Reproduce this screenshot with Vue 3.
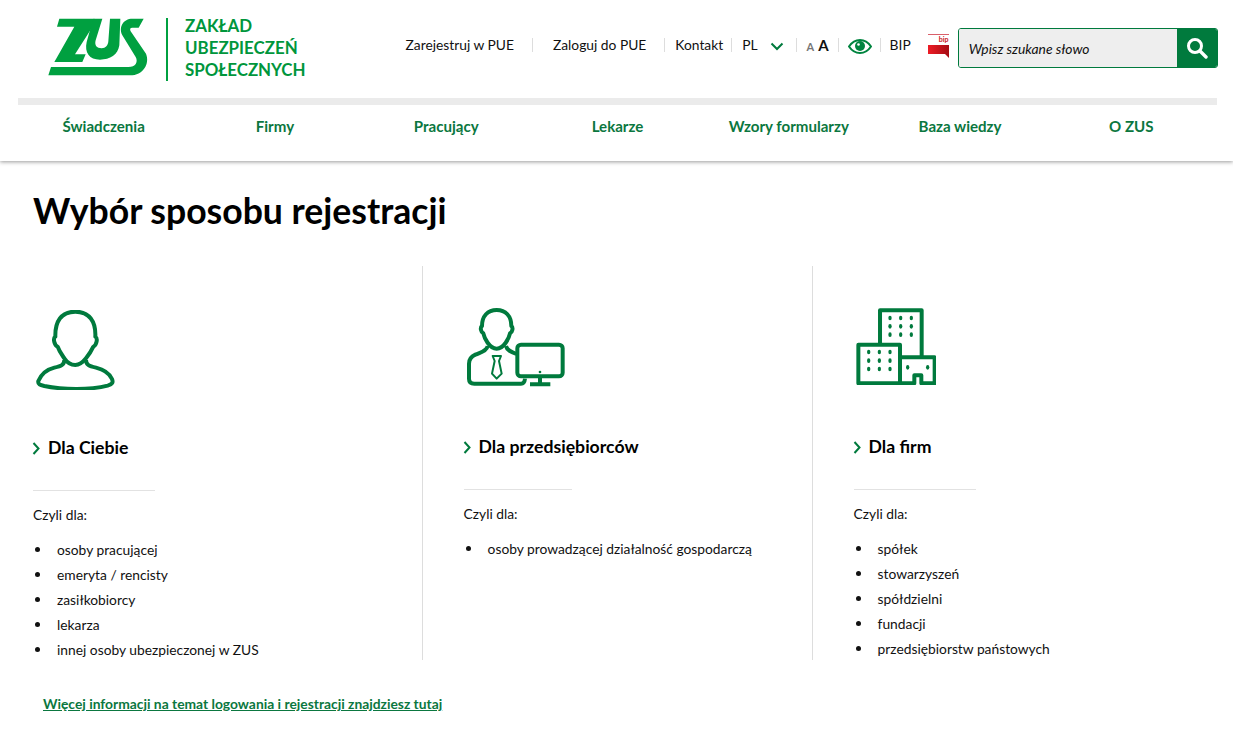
<template>
  <div class="page">
    <header class="header">
      <div class="top">
        <a class="logo" href="#">
          <svg class="logo-mark" viewBox="0 0 330 210" width="110" height="70">
            <path d="M43 20H148V36L90 127H122L112 150H28L88 44H36Z" />
            <path d="M140 36L146 20H172L152 85C148 100 155 109 170 109C182 109 189 100 190 88L195 20H226L223 100C219 128 195 143 165 143C133 143 118 122 125 90Z" />
            <path d="M296 20L281 47H262C255 47 254 52 257 58L303 125C315 155 295 190 255 190H10L18 165H250C272 165 280 150 272 135L232 70C220 45 235 20 262 20Z" />
          </svg>
          <span class="logo-line"></span>
          <span class="logo-text">ZAKŁAD<br />UBEZPIECZEŃ<br />SPOŁECZNYCH</span>
        </a>
        <nav class="util">
          <a class="util-item first" href="#">Zarejestruj w PUE</a>
          <a class="util-item wide" href="#">Zaloguj do PUE</a>
          <a class="util-item kontakt" href="#">Kontakt</a>
          <div class="util-item lang">
            PL
            <svg viewBox="0 0 14 9" width="14" height="9" class="chev">
              <path d="M1.5 1.5L7 7L12.5 1.5" fill="none" stroke="#007a3d" stroke-width="2" />
            </svg>
          </div>
          <div class="util-item sizes"><span class="a-small">A</span><span class="a-big">A</span></div>
          <div class="util-item eye">
            <svg viewBox="0 0 24 15" width="24" height="15">
              <path d="M1 7.5C4 3 8 1 12 1C16 1 20 3 23 7.5C20 12 16 14 12 14C8 14 4 12 1 7.5Z" fill="none" stroke="#00843f" stroke-width="2" />
              <circle cx="12" cy="7" r="5" fill="#00843f" />
              <circle cx="10.5" cy="5.5" r="1.3" fill="#fff" />
            </svg>
          </div>
          <a class="util-item bip-link" href="#">BIP</a>
          <svg class="bip" viewBox="0 0 21 24" width="21" height="24">
            <defs>
              <linearGradient id="bipGrad" x1="0" x2="1" y1="0" y2="0">
                <stop offset="0" stop-color="#ee1c25" />
                <stop offset="1" stop-color="#a50d14" />
              </linearGradient>
            </defs>
            <rect x="0" y="0" width="21" height="1" fill="#d9606a" />
            <text x="20.5" y="8" text-anchor="end" class="bip-text">bip</text>
            <path d="M0 11H21V24L17 20H0Z" fill="url(#bipGrad)" />
          </svg>
        </nav>
        <form class="search" @submit.prevent>
          <input class="search-input" type="text" placeholder="Wpisz szukane słowo" v-model="keyword" />
          <button class="search-btn" type="submit" aria-label="Szukaj">
            <svg viewBox="0 0 22 22" width="22" height="22">
              <circle cx="9" cy="9" r="6.5" fill="none" stroke="#fff" stroke-width="3" />
              <path d="M14 14L20 20" stroke="#fff" stroke-width="3.4" stroke-linecap="round" />
            </svg>
          </button>
        </form>
      </div>
      <div class="grey-bar"></div>
      <nav class="menu">
        <a v-for="item in menu" :key="item" href="#">{{ item }}</a>
      </nav>
    </header>

    <main class="content">
      <h1>Wybór sposobu rejestracji</h1>
      <div class="cols">
        <section class="col" v-for="col in cols" :key="col.title" :class="col.cls">
          <div class="icon">
            <svg v-if="col.cls === 'you'" viewBox="50 45 240 240" width="80" height="80" class="ico">
              <path d="M168 50C125 50 107 80 108 125C100 130 105 150 115 155C120 170 128 180 135 190C145 205 160 210 168 210C180 210 192 200 200 190C208 180 215 170 222 155C232 150 236 130 228 125C230 80 210 50 168 50Z" />
              <path d="M135 195C135 210 125 213 105 218C80 224 65 240 57 258C55 268 62 270 75 273C135 285 210 285 265 272C280 268 282 262 278 252C270 235 255 224 230 218C210 213 200 210 200 195" />
            </svg>
            <svg v-else-if="col.cls === 'biz'" viewBox="30 38 297 237" width="99" height="79" class="ico">
              <path d="M122 44C95 44 78 62 78 92C72 96 74 110 82 114C85 128 100 160 122 160C144 160 159 128 162 114C170 110 172 96 166 92C166 62 149 44 122 44Z" />
              <path d="M95 152C92 168 75 170 58 178C45 184 39 192 39 205V250C39 260 45 265 55 265H195C202 265 206 260 207 250" />
              <path d="M150 152C153 165 165 170 181 176" />
              <rect x="184" y="148" width="136" height="95" rx="11" />
              <path d="M252 243V267M222 267H283" />
              <circle cx="252" cy="230" r="4" class="fill" />
              <path d="M110 182H135L129 197L137 235L122 250L108 235L116 197Z" class="thin" />
            </svg>
            <svg v-else viewBox="33 40 242 232" width="80.7" height="77.3" class="ico">
              <path d="M105 150V47H230V187" />
              <rect x="40" y="150" width="125" height="116" />
              <path d="M165 188H269V266H229V242H208V266H165" />
              <g class="dots">
                <ellipse v-for="d in dots" :key="d[0] + '-' + d[1]" :cx="d[0]" :cy="d[1]" rx="5" ry="7" />
              </g>
            </svg>
          </div>
          <h2><svg viewBox="0 0 8 13" width="8" height="13" class="arrow"><path d="M1.5 1L6.5 6.5L1.5 12" fill="none" stroke="#007a3d" stroke-width="2" /></svg>{{ col.title }}</h2>
          <hr />
          <p>Czyli dla:</p>
          <ul>
            <li v-for="row in col.rows" :key="row">{{ row }}</li>
          </ul>
        </section>
      </div>
      <a class="more" href="#">Więcej informacji na temat logowania i rejestracji znajdziesz tutaj</a>
    </main>
  </div>
</template>

<script setup>
import { ref } from 'vue';

const keyword = ref('');

const menu = ['Świadczenia', 'Firmy', 'Pracujący', 'Lekarze', 'Wzory formularzy', 'Baza wiedzy', 'O ZUS'];

const cols = [
  { cls: 'you', title: 'Dla Ciebie', rows: ['osoby pracującej', 'emeryta / rencisty', 'zasiłkobiorcy', 'lekarza', 'innej osoby ubezpieczonej w ZUS'] },
  { cls: 'biz', title: 'Dla przedsiębiorców', rows: ['osoby prowadzącej działalność gospodarczą'] },
  { cls: 'org', title: 'Dla firm', rows: ['spółek', 'stowarzyszeń', 'spółdzielni', 'fundacji', 'przedsiębiorstw państowych'] },
];

// kropki-okna na budynkach
const dots = [
  [135, 70], [167, 70], [199, 70], [135, 95], [167, 95], [199, 95], [135, 120], [167, 120], [199, 120],
  [71, 172], [103, 172], [135, 172], [71, 198], [103, 198], [135, 198], [71, 223], [103, 223], [135, 223],
  [188, 218], [248, 218],
];
</script>

<style>
body {
  background: #fff;
}
</style>

<style scoped>
.page {
  font-family: Lato, "Liberation Sans", sans-serif;
  color: #111;
  font-size: 13.8px;
}
a {
  color: inherit;
  text-decoration: none;
}
.header {
  height: 161px;
  box-shadow: 0 1px 4px rgba(0, 0, 0, 0.4);
}
.top {
  height: 98px;
  display: flex;
  align-items: flex-start;
}
.logo {
  display: flex;
  align-items: flex-start;
  margin: 12px 0 0 45px;
}
.logo-mark path {
  fill: #00a040;
}
.logo-line {
  width: 2px;
  height: 63px;
  margin: 6px 0 0 11px;
  background: #00a040;
}
.logo-text {
  margin: 3px 0 0 17px;
  font-weight: 700;
  font-size: 16.9px;
  line-height: 22px;
  color: #00963c;
}
.util {
  display: flex;
  align-items: center;
  height: 20px;
  margin: 35px 0 0 100px;
}
.util-item {
  display: flex;
  align-items: center;
  height: 14px;
  padding: 0 9px 0 10px;
  border-right: 1px solid #ddd;
  line-height: 14px;
  white-space: nowrap;
}
.util-item.first {
  padding: 0 18px 0 0;
}
.util-item.wide {
  padding: 0 18px 0 20px;
}
.util-item.kontakt {
  padding-right: 8px;
}
.lang {
  gap: 12px;
  padding-right: 12px;
}
.chev {
  margin-top: 2px;
}
.sizes {
  align-items: baseline;
  gap: 4px;
}
.a-small {
  font-size: 11px;
  font-weight: 700;
  color: #777;
}
.a-big {
  font-size: 15px;
  font-weight: 700;
}
.eye {
  padding: 0 8px 0 9px;
}
.eye svg {
  margin-top: 3px;
}
.bip-link {
  border-right: 0;
  padding-left: 9px;
}
.bip {
  margin: -1px 0 0 8px;
  align-self: flex-start;
}
.bip-text {
  font-size: 7px;
  font-weight: 700;
  fill: #c8141c;
}
.search {
  display: flex;
  width: 260px;
  height: 40px;
  margin: 28px 0 0 9px;
  border: 1px solid #007a3d;
  border-radius: 3px;
  box-sizing: border-box;
  overflow: hidden;
}
.search-input {
  flex: 1;
  min-width: 0;
  border: 0;
  outline: 0;
  padding: 0 10px;
  background: #eee;
  font: italic 13.85px Lato, sans-serif;
  color: #111;
}
.search-input::placeholder {
  color: #111;
  opacity: 1;
}
.search-btn {
  width: 40px;
  border: 0;
  padding: 0;
  background: #007a3d;
  display: flex;
  align-items: center;
  justify-content: center;
}
.grey-bar {
  height: 7px;
  margin: 0 16px 0 18px;
  background: #ebebeb;
}
.menu {
  display: grid;
  grid-template-columns: repeat(7, 1fr);
  margin: 0 16px 0 18px;
  padding-top: 12px;
}
.menu a {
  text-align: center;
  font-weight: 700;
  font-size: 15.1px;
  line-height: 18px;
  color: #0b7740;
}
.content {
  padding: 0 0 0 33px;
}
h1 {
  margin: 0;
  padding-top: 27px;
  font-size: 35.6px;
  line-height: 46px;
  font-weight: 700;
  color: #000;
}
.cols {
  display: flex;
  margin-top: 32px;
  height: 394px;
}
.col {
  width: 390px;
  box-sizing: border-box;
  padding-left: 40.6px;
  padding-top: 42px;
  border-right: 1px solid #ddd;
}
.col.you {
  padding-left: 0;
}
.col.org {
  border-right: 0;
}
.icon {
  height: 84px;
  margin-left: 2px;
}
.col.you .icon {
  height: 83px;
  padding-top: 2px;
  margin-left: 3px;
}
.ico {
  fill: none;
  stroke: #007a3d;
  stroke-width: 12;
  stroke-linejoin: round;
}
.ico .fill,
.ico .dots {
  fill: #007a3d;
  stroke: none;
}
.ico .thin {
  stroke-width: 6;
}
h2 {
  display: flex;
  align-items: center;
  margin: 44px 0 0;
  font-size: 17.65px;
  line-height: 22px;
  font-weight: 700;
  color: #000;
}
.arrow {
  margin: 0 8px 0 -1px;
}
hr {
  width: 122px;
  height: 1px;
  margin: 31px 0 0;
  border: 0;
  background: #e2e2e2;
}
.col.biz hr {
  width: 108px;
}
p {
  margin: 15px 0 0;
  line-height: 18px;
}
ul {
  list-style: none;
  margin: 13px 0 0;
  padding: 0;
}
li {
  display: flex;
  align-items: center;
  height: 25px;
}
li::before {
  content: "";
  width: 5px;
  height: 5px;
  margin: 0 17px 0 2px;
  border-radius: 50%;
  background: #111;
}
.more {
  display: inline-block;
  margin: 35px 0 0 10px;
  font-weight: 700;
  font-size: 13.83px;
  color: #0b7740;
  text-decoration: underline;
}
</style>
